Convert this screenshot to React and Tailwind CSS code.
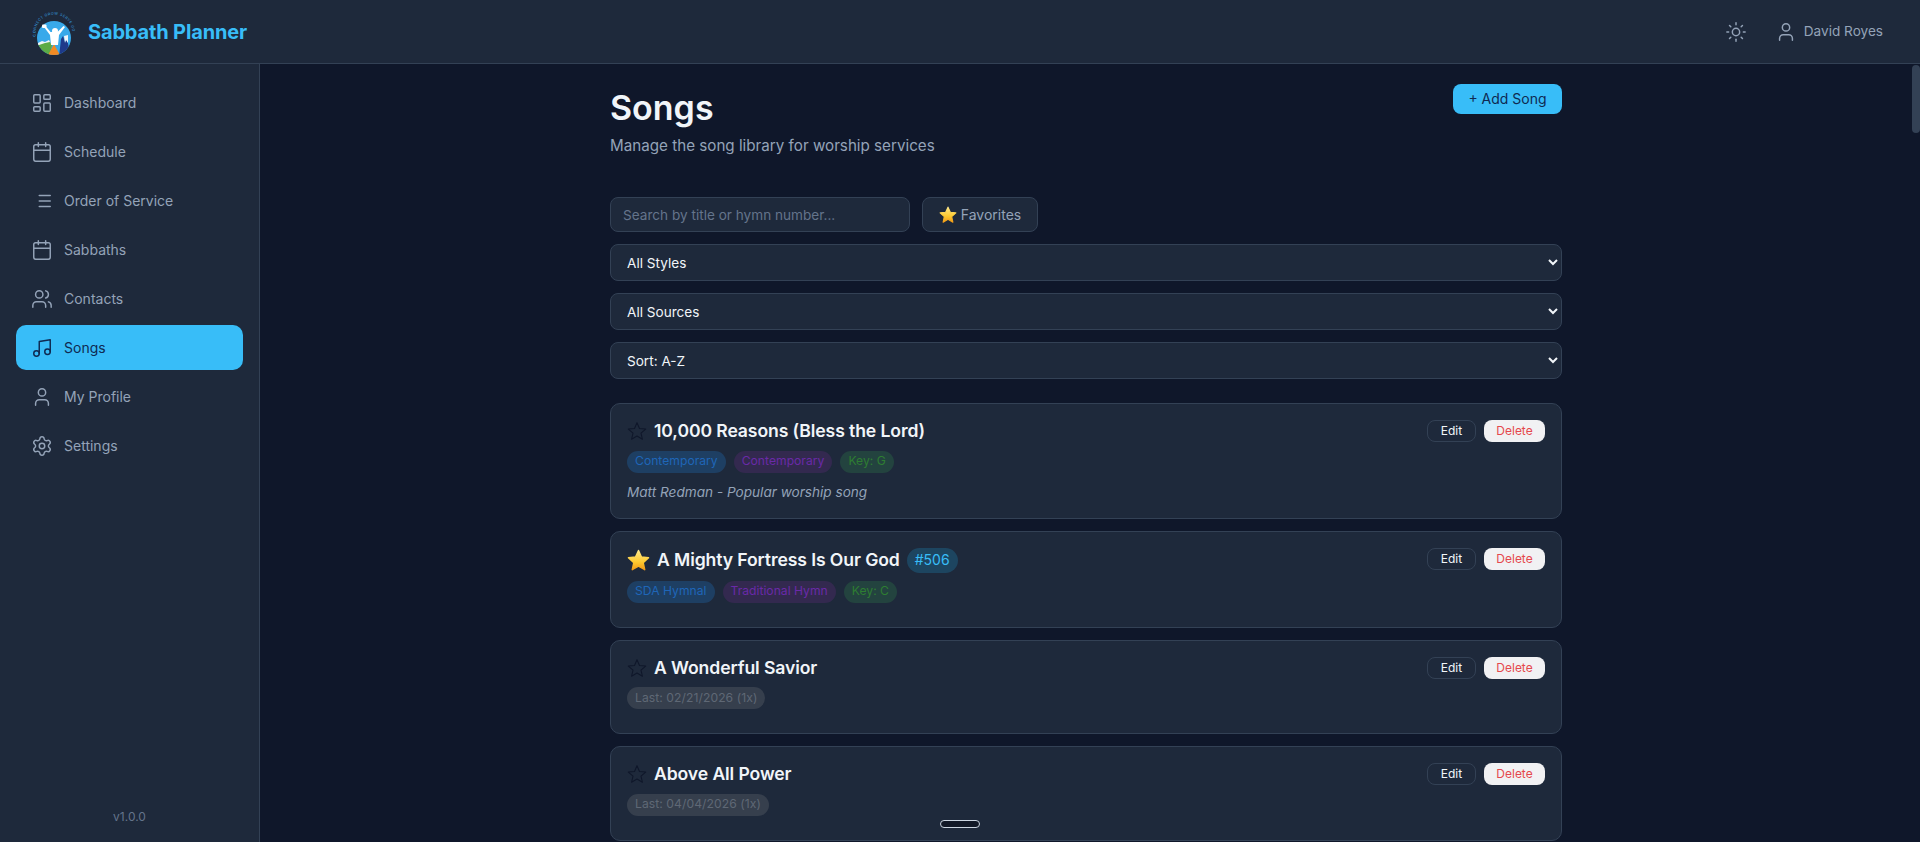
import React from "react";
import { LayoutDashboard, Calendar, Users, Music, User, Settings, Sun } from "lucide-react";

// lucide's List has dots on the left, the picture only has the three lines
function Lines({ size, strokeWidth }) {
  return (
    <svg width={size} height={size} viewBox="0 0 24 24" fill="none" stroke="currentColor" strokeWidth={strokeWidth} strokeLinecap="round">
      <path d="M9 6h12M9 12h12M9 18h12" />
    </svg>
  );
}

const NAV = [
  { label: "Dashboard", icon: LayoutDashboard },
  { label: "Schedule", icon: Calendar },
  { label: "Order of Service", icon: Lines },
  { label: "Sabbaths", icon: Calendar },
  { label: "Contacts", icon: Users },
  { label: "Songs", icon: Music, active: true },
  { label: "My Profile", icon: User },
  { label: "Settings", icon: Settings },
];

const SONGS = [
  {
    title: "10,000 Reasons (Bless the Lord)",
    tags: [
      { text: "Contemporary", kind: "blue" },
      { text: "Contemporary", kind: "purple" },
      { text: "Key: G", kind: "green" },
    ],
    note: "Matt Redman - Popular worship song",
  },
  {
    title: "A Mighty Fortress Is Our God",
    favorite: true,
    number: "#506",
    tags: [
      { text: "SDA Hymnal", kind: "blue" },
      { text: "Traditional Hymn", kind: "purple" },
      { text: "Key: C", kind: "green" },
    ],
  },
  {
    title: "A Wonderful Savior",
    tags: [{ text: "Last: 02/21/2026 (1x)", kind: "gray" }],
  },
  {
    title: "Above All Power",
    tags: [{ text: "Last: 04/04/2026 (1x)", kind: "gray" }],
  },
];

const TAG_STYLES = {
  blue: "bg-[#1e3f63] text-[#1f66b8]",
  purple: "bg-[#33294f] text-[#6a2aa8]",
  green: "bg-[#23433f] text-[#2e7d32]",
  gray: "bg-[#363f4d] text-[#5f6875] tracking-[0.06px]",
};

function GoldStar({ size }) {
  return (
    <svg width={size} height={size} viewBox="0 0 24 24" className="shrink-0">
      <defs>
        <linearGradient id="gold" x1="0" y1="0" x2="0" y2="1">
          <stop offset="0" stopColor="#ffe98a" />
          <stop offset="0.6" stopColor="#fdc92f" />
          <stop offset="1" stopColor="#f09a17" />
        </linearGradient>
      </defs>
      <path
        d="M12 1.5l3.1 6.9 7.4.8-5.6 5 1.6 7.4L12 17.8l-6.5 3.8 1.6-7.4-5.6-5 7.4-.8z"
        fill="url(#gold)"
        stroke="url(#gold)"
        strokeWidth="1.5"
        strokeLinejoin="round"
      />
    </svg>
  );
}

function EmptyStar() {
  return (
    <svg width="20" height="20" viewBox="0 0 24 24" className="shrink-0" fill="none" stroke="#0f172a" strokeWidth="1.3">
      <path d="M12 2l3 7 7.4.7-5.6 4.9 1.7 7.3L12 18.1l-6.5 3.8 1.7-7.3L1.6 9.7 9 9z" strokeLinejoin="round" />
    </svg>
  );
}

function Logo() {
  return (
    <svg width="46" height="46" viewBox="0 0 46 46" className="shrink-0 overflow-visible">
      <defs>
        <path id="logoArc" d="M4.9 28 A18.5 18.5 0 1 1 41.1 28" />
        <clipPath id="logoClip">
          <circle cx="23" cy="29" r="17" />
        </clipPath>
      </defs>
      <circle cx="23" cy="29" r="17" fill="#38a9ea" />
      <g clipPath="url(#logoClip)">
        <path d="M5 36l6-3 3 1 4-2 3 4-3 14H5z" fill="#5cab46" />
        <path d="M5 35l6-3 3 1 4-2 1 2-5 1-3 1-6 2z" fill="#f1f5f9" />
        <path d="M16 48l7-13 7 13z" fill="#f08a24" />
        <path d="M28 48l2-18 2-3 2 6 2-3 4 18z" fill="#1e3a8a" />
        <path d="M33 27l1 7 1-3 2 3v-8z" fill="#f1f5f9" />
      </g>
      <circle cx="24" cy="22" r="3" fill="#fff" />
      <path d="M13 18l6 8 1 10h7l1-10 6-8-1.500-1-6 6h-7l-5-6z" fill="#fff" />
      <rect x="11" y="15.500" width="4.500" height="3.500" rx="1" fill="#fff" />
      <text fill="#38a0e0" fontSize="3.6" fontFamily="Inter, sans-serif" letterSpacing="0.5">
        <textPath href="#logoArc" startOffset="1%">CONNECT GROW SERVE GO</textPath>
      </text>
    </svg>
  );
}

function SongCard({ song }) {
  return (
    <div className="bg-[#1e293b] border border-[#334155] rounded-[10px] px-4 pt-4 pb-4 flex justify-between">
      <div>
        <div className={`flex items-center gap-[7px] ${song.number ? "" : "h-[22.5px]"}`}>
          {song.favorite ? <GoldStar size={23} /> : <EmptyStar />}
          <h3 className="text-[17.6px] leading-[22px] font-semibold tracking-[-0.1px] text-[#f1f5f9]">{song.title}</h3>
          {song.number && (
            <span className="bg-[#1d4560] text-[#38bdf8] text-sm rounded-full px-2 h-[25px] flex items-center">{song.number}</span>
          )}
        </div>
        <div className="flex gap-2 mt-2 mb-2">
          {song.tags.map((tag, i) => (
            <span key={i} className={`text-[12.16px] rounded-full px-2 h-[22px] flex items-center ${TAG_STYLES[tag.kind]}`}>
              {tag.text}
            </span>
          ))}
        </div>
        {song.note && <p className="italic text-[13.6px] leading-[20px] pt-[1px] text-[#94a3b8]">{song.note}</p>}
      </div>
      <div className="flex gap-2 h-[22px]">
        <button className="border border-[#334155] rounded-lg text-xs text-[#f1f5f9] w-[49px]">Edit</button>
        <button className="bg-[#f1f1f3] rounded-lg text-xs text-[#e5484d] w-[61px]">Delete</button>
      </div>
    </div>
  );
}

export default function App() {
  return (
    <div className="h-screen flex flex-col overflow-hidden bg-[#0f172a] font-['Inter',sans-serif]">
      <header className="h-[64px] shrink-0 bg-[#1e293b] border-b border-[#334155] flex items-center justify-between pl-[31px] pr-[37px]">
        <div className="flex items-center gap-[11px]">
          <Logo />
          <span className="text-xl font-bold text-[#38bdf8] tracking-[-0.15px]">Sabbath Planner</span>
        </div>
        <div className="flex items-center gap-7">
          <Sun size={22} className="text-[#94a3b8]" strokeWidth={1.6} />
          <div className="flex items-center gap-[7px] text-[13.6px] text-[#94a3b8]">
            <User size={22} strokeWidth={1.6} />
            David Royes
          </div>
        </div>
      </header>

      <div className="flex-1 flex min-h-0">
        <aside className="w-[260px] shrink-0 bg-[#1e293b] border-r border-[#334155] px-4 pt-4 pb-[17px] flex flex-col">
          <nav className="flex flex-col gap-1">
            {NAV.map((item) => {
              const Icon = item.icon;
              return (
                <a
                  key={item.label}
                  className={`h-[45px] rounded-[10px] flex items-center gap-[11px] pl-[15px] text-sm ${
                    item.active ? "bg-[#38bdf8] text-[#0f2a52]" : "text-[#94a3b8]"
                  }`}
                >
                  <Icon size={22} strokeWidth={1.6} />
                  {item.label}
                </a>
              );
            })}
          </nav>
          <div className="mt-auto text-center text-xs text-[#64748b]">v1.0.0</div>
        </aside>

        <main className="flex-1 min-w-0 relative">
          <div className="max-w-[952px] mx-auto pr-[8px] box-content pt-[24px]">
            <div className="flex justify-between items-start">
              <div>
                <h1 className="text-[34px] font-semibold text-[#f1f5f9] leading-[40px]">Songs</h1>
                <p className="text-[15.2px] text-[#94a3b8] mt-[6px] leading-6">Manage the song library for worship services</p>
              </div>
              <button className="bg-[#38bdf8] text-[#0f2a52] text-sm rounded-lg h-[30px] w-[109px] -mt-[4px]">
                + Add Song
              </button>
            </div>

            <div className="flex gap-3 mt-[39px]">
              <input
                placeholder="Search by title or hymn number..."
                className="w-[300px] h-[35px] bg-[#1e293b] border border-[#334155] rounded-lg px-3 text-[13.6px] text-[#f1f5f9] placeholder:text-[#64748b] outline-none"
              />
              <button className="h-[35px] w-[116px] bg-[#1e293b] border border-[#334155] rounded-lg text-sm text-[#94a3b8] flex items-center justify-center gap-[4px]">
                <GoldStar size={18} />
                Favorites
              </button>
            </div>

            <div className="flex flex-col gap-3 mt-3">
              {["All Styles", "All Sources", "Sort: A-Z"].map((label) => (
                <select
                  key={label}
                  className="h-[37px] w-full bg-[#1e293b] border border-[#334155] rounded-lg px-3 text-[13.6px] text-[#f1f5f9] outline-none"
                >
                  <option>{label}</option>
                </select>
              ))}
            </div>

            <div className="flex flex-col gap-3 mt-6">
              {SONGS.map((song) => (
                <SongCard key={song.title} song={song} />
              ))}
            </div>
          </div>

          <div className="absolute top-[1px] right-0 w-[8px] h-[68px] bg-[#334155] rounded-full" />
          <div className="absolute left-[680px] bottom-[14px] w-[40px] h-[8px] bg-[#111827] border border-[#cbd5e1] rounded-full" />
        </main>
      </div>
    </div>
  );
}
